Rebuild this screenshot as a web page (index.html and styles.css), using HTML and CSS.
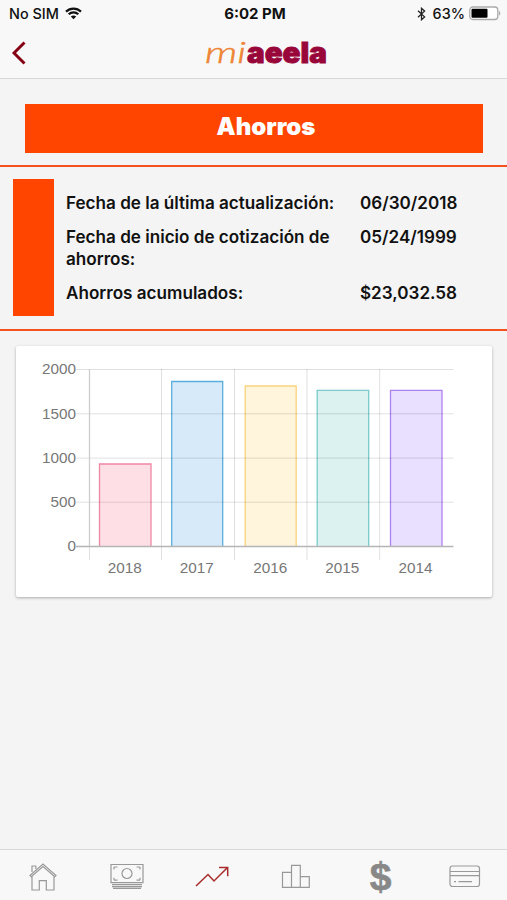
FILE: index.html
```html
<!DOCTYPE html>
<html lang="es">
<head>
    <meta charset="UTF-8">
    <meta name="viewport" content="width=device-width, initial-scale=1.0">
    <title>miaeela - Ahorros</title>
    <link rel="stylesheet" href="styles.css">
</head>
<body>

<header class="header">
    <div class="status">
        <div class="status-left">
            <span>No SIM</span>
            <svg width="17" height="13" viewBox="0 0 17 13" fill="none" stroke="#111" stroke-width="2.2">
                <path d="M1 4.6C5.2.5 11.8.5 16 4.6M3.700 7.300c2.700-2.600 6.900-2.600 9.600 0"/>
                <path d="M8.500 12.300 5.800 9.500c1.500-1.400 3.900-1.400 5.400 0z" fill="#111" stroke="none"/>
            </svg>
        </div>
        <div class="status-time">6:02 PM</div>
        <div class="status-right">
            <svg width="9" height="14" viewBox="0 0 9 14" fill="none" stroke="#222" stroke-width="1.3">
                <path d="M1 3.700 7.600 9.900 4.500 12.700V1.300L7.600 4.100 1 10.300"/>
            </svg>
            <span class="percent">63%</span>
            <svg width="32" height="15" viewBox="0 0 32 15">
                <rect x=".8" y="1" width="28" height="12.500" rx="3" fill="#fff" stroke="#aaa" stroke-width="1.300"/>
                <rect x="2.500" y="2.700" width="16" height="9.100" rx="1" fill="#000"/>
                <path d="M30 5v4.600c1.700-.7 1.700-3.900 0-4.600z" fill="#aaa"/>
            </svg>
        </div>
    </div>
    <div class="navbar">
        <svg class="back" width="16" height="24" viewBox="0 0 16 24" fill="none" stroke="#850012" stroke-width="2.900">
            <path d="M13.500 1.500 3 12l10.500 10.500"/>
        </svg>
        <svg class="logo" width="132" height="46" viewBox="0 0 132 46">
            <text class="logo-mi" x="4" y="33" textLength="41" lengthAdjust="spacingAndGlyphs">mi</text>
            <text class="logo-aeela" x="46" y="33" textLength="80" lengthAdjust="spacingAndGlyphs">aeela</text>
        </svg>
    </div>
</header>

<main class="content">
    <h1 class="title">Ahorros</h1>

    <section class="summary">
        <div class="stripe"></div>
        <dl class="details">
            <dt>Fecha de la última actualización:</dt>
            <dd>06/30/2018</dd>
            <dt>Fecha de inicio de cotización de ahorros:</dt>
            <dd>05/24/1999</dd>
            <dt>Ahorros acumulados:</dt>
            <dd>$23,032.58</dd>
        </dl>
    </section>

    <section class="card">
        <svg class="chart" width="476" height="251" viewBox="1 0 476 251">
            <!-- bars -->
            <g stroke-width="1.300">
                <path d="M84.500 200.500V118H136v82.500" fill="#ffdfe6" stroke="#ef87a4"/>
                <path d="M156.700 200.500V35.500h51v165" fill="#d7eafa" stroke="#5aaedc"/>
                <path d="M230.200 200.500V40h51v160.500" fill="#fff4dc" stroke="#f8d37c"/>
                <path d="M302.200 200.500V44.300h51.500v156.200" fill="#dbf2f0" stroke="#79caca"/>
                <path d="M375.500 200.500V44.300h51.500v156.200" fill="#e9dffe" stroke="#ac82f0"/>
            </g>
            <!-- grid -->
            <g stroke="#000" stroke-opacity=".12">
                <path d="M61 23.500h377.500M61 67.800h377.500M61 112.100h377.500M61 156.200h377.500"/>
                <path d="M146.500 23v191M219.500 23v191M292 23v191M364.700 23v191"/>
                <path d="M74.500 200v14"/>
            </g>
            <path d="M61 200.500h377.500" stroke="#b5b5b5" stroke-width="1.300"/>
            <path d="M74.500 23v177" stroke="#cdcdcd" stroke-width="1.300"/>
            <g class="axis" text-anchor="end">
                <text x="61" y="28">2000</text>
                <text x="61" y="72.500">1500</text>
                <text x="61" y="117">1000</text>
                <text x="61" y="161">500</text>
                <text x="61" y="205">0</text>
            </g>
            <g class="axis" text-anchor="middle">
                <text x="109.800" y="227">2018</text>
                <text x="181.800" y="227">2017</text>
                <text x="255.200" y="227">2016</text>
                <text x="327.200" y="227">2015</text>
                <text x="400.500" y="227">2014</text>
            </g>
        </svg>
    </section>
</main>

<nav class="tabs">
    <a class="tab">
        <svg width="34" height="34" viewBox="0 0 34 34">
            <path d="M4 15.500 17 4l13 11.500-1.300 1.300L17 6.600 5.300 16.800zM6 12V6h3.800v3M6 16v14h7.300v-9.300h7V30H28V16"/>
        </svg>
    </a>
    <a class="tab">
        <svg width="34" height="34" viewBox="0 0 34 34">
            <path d="M1 4.500h32v18.200H1zM2 24.700h30M2 26.700h30M3 28.300h28M4 7h3.500M4 7v2.500M30 7h-3.500M30 7v2.500M4 20.200h3.500M4 20.200v-2.500M30 20.200h-3.500M30 20.200v-2.500"/>
            <circle cx="17" cy="13.500" r="5"/>
        </svg>
    </a>
    <a class="tab active">
        <svg width="36" height="34" viewBox="0 0 36 34">
            <path d="m2 26 12-11.500 6 6.500L33.500 7.500M25 7.500h8.700v8.700"/>
        </svg>
    </a>
    <a class="tab">
        <svg width="34" height="34" viewBox="0 0 34 34">
            <path d="M3.500 12.300h9v15h-9zM12.500 5.300h8.800v22h-8.800zM21.300 16.700h9v10.600h-9z"/>
        </svg>
    </a>
    <a class="tab dollar">$</a>
    <a class="tab">
        <svg width="34" height="34" viewBox="0 0 34 34">
            <rect x="2" y="6" width="29.500" height="20.500" rx="2.500"/>
            <path d="M2 11.500h29.500M2 15.700h29.500M6 21.700h2M10.500 21.700h13.500"/>
        </svg>
    </a>
</nav>

</body>
</html>
```

FILE: styles.css
```css
body, html {
    height: 100%;
    margin: 0;
}

body {
    display: flex;
    flex-direction: column;
    overflow: hidden;
    background-color: #f4f4f4;
    color: #111;
    font-family: Inter, "Liberation Sans", sans-serif;
}

svg {
    display: block;
}

.header {
    box-sizing: border-box;
    height: 79px;
    background-color: #f8f8f8;
    border-bottom: 1px solid #d9d9d9;
}

.status {
    display: grid;
    grid-template-columns: 1fr auto 1fr;
    align-items: center;
    height: 27px;
    padding: 0 6px 0 9px;
    font-size: 14.4px;
    font-weight: 500;
}

.status-left, .status-right {
    display: flex;
    align-items: center;
    gap: 6px;
}

.status-right {
    justify-content: flex-end;
    gap: 4px;
}

.percent {
    margin-left: 3px;
}

.status-time {
    font-size: 15px;
    font-weight: 700;
}

.navbar {
    display: grid;
    grid-template-columns: 1fr 132px 1fr;
    align-items: center;
    height: 51px;
    padding: 0 0 0 26px;
}

.back {
    margin-left: -15px;
}

.logo-mi {
    font-family: Lato, sans-serif;
    font-style: italic;
    font-weight: 300;
    font-size: 30px;
    fill: #ee8434;
    stroke: #ee8434;
    stroke-width: .5;
}

.logo-aeela {
    font-weight: 900;
    font-size: 29px;
    fill: #98063a;
    stroke: #98063a;
    stroke-width: .9;
}

.content {
    flex: 1;
}

.title {
    height: 49px;
    margin: 25px 24px 12px 25px;
    padding-left: 24px;
    background-color: #ff4500;
    color: white;
    font-size: 24px;
    font-weight: 900;
    line-height: 45px;
    text-align: center;
}

.summary {
    display: flex;
    box-sizing: border-box;
    height: 166px;
    padding: 12px 13px;
    border-top: 2px solid #f4511e;
    border-bottom: 2px solid #f4511e;
}

.stripe {
    width: 41px;
    height: 137px;
    background-color: #ff4500;
}

.details {
    display: grid;
    grid-template-columns: 294px 1fr;
    align-content: start;
    row-gap: 12px;
    flex: 1;
    margin: 0;
    padding: 13px 0 0 12px;
    font-size: 17.1px;
    font-weight: 600;
    line-height: 22px;
}

.details dt {
    padding-right: 20px;
}

.details dd {
    margin: 0;
}

.card {
    margin: 15px 15px 0 16px;
    background-color: white;
    border-radius: 2px;
    box-shadow: 0 1px 3px rgba(0, 0, 0, .3);
}

.axis text {
    font-family: "Liberation Sans", Arial, sans-serif;
    font-size: 15.3px;
    fill: #777;
}

.tabs {
    display: grid;
    grid-template-columns: repeat(6, 1fr);
    box-sizing: border-box;
    height: 51px;
    padding-left: 1px;
    border-top: 1px solid #d9d9d9;
    background-color: #f8f8f8;
}

.tab {
    display: flex;
    justify-content: center;
    align-items: center;
    padding-top: 4px;
}

.tab svg {
    fill: none;
    stroke: #999;
    stroke-width: 1.2;
}

.tab.active svg {
    stroke: #a82c2c;
    stroke-width: 1.5;
}

.dollar {
    padding-top: 3px;
    color: #888;
    font-family: "Liberation Sans", Arial, sans-serif;
    font-size: 39px;
    font-weight: 700;
    line-height: 1;
    -webkit-text-stroke: .6px #888;
}
```
